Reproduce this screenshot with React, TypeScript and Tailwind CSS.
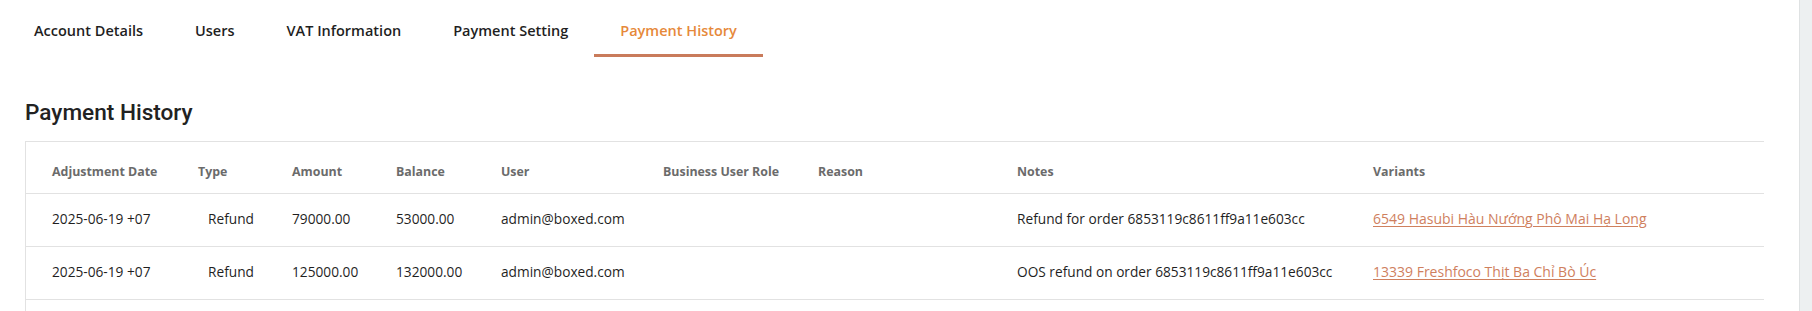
import React from "react";

const tabs = ["Account Details", "Users", "VAT Information", "Payment Setting", "Payment History"];

const cols = [
  { label: "Adjustment Date", w: "w-[146px]" },
  { label: "Type", w: "w-[94px]" },
  { label: "Amount", w: "w-[104px]" },
  { label: "Balance", w: "w-[105px]" },
  { label: "User", w: "w-[162px]" },
  { label: "Business User Role", w: "w-[155px]" },
  { label: "Reason", w: "w-[199px]" },
  { label: "Notes", w: "w-[356px]" },
  { label: "Variants", w: "flex-1" },
];

const rows = [
  {
    date: "2025-06-19 +07",
    type: "Refund",
    amount: "79000.00",
    balance: "53000.00",
    user: "admin@boxed.com",
    notes: "Refund for order 6853119c8611ff9a11e603cc",
    variant: "6549 Hasubi Hàu Nướng Phô Mai Hạ Long",
  },
  {
    date: "2025-06-19 +07",
    type: "Refund",
    amount: "125000.00",
    balance: "132000.00",
    user: "admin@boxed.com",
    notes: "OOS refund on order 6853119c8611ff9a11e603cc",
    variant: "13339 Freshfoco Thịt Ba Chỉ Bò Úc",
  },
];

export default function App() {
  return (
    <div className="flex h-[311px] w-full overflow-hidden bg-white font-['Open_Sans',sans-serif] text-[#1f1f1f]">
      <main className="flex-1 pl-[8px] pr-[35px]">
        {/* tabs */}
        <nav className="flex">
          {tabs.map((t) => {
            const active = t === "Payment History";
            return (
              <button
                key={t}
                className={
                  active
                    ? "border-b-[3px] border-[#c97b5b] px-[26px] pt-[21px] pb-[13px] text-[14.5px] leading-5 font-semibold text-[#e6893a]"
                    : "border-b-[3px] border-transparent px-[26px] pt-[21px] pb-[13px] text-[14.5px] leading-5 font-semibold text-[#1f1f1f]"
                }
              >
                {t}
              </button>
            );
          })}
        </nav>

        <h2 className="mt-[42px] ml-[17px] font-['Roboto',sans-serif] text-[22.6px] leading-7 font-medium text-[#222]">
          Payment History
        </h2>

        {/* table */}
        <div className="mt-[14px] ml-[17px] border-t border-l border-[#e2e2e2] text-[13.7px]">
          <div className="flex h-[52px] items-center border-b border-[#e2e2e2] pt-[10px] pl-[26px] text-[12.4px] font-bold text-[#6b6b6b]">
            {cols.map((c) => (
              <div key={c.label} className={c.w}>
                {c.label}
              </div>
            ))}
          </div>
          {rows.map((r, i) => (
            <div key={i} className="flex h-[53px] items-center border-b border-[#e2e2e2] pb-[2px] pl-[26px]">
              <div className="w-[146px]">{r.date}</div>
              <div className="w-[94px] pl-[10px]">{r.type}</div>
              <div className="w-[104px]">{r.amount}</div>
              <div className="w-[105px]">{r.balance}</div>
              <div className="w-[162px]">{r.user}</div>
              <div className="w-[155px]" />
              <div className="w-[199px]" />
              <div className="w-[356px]">{r.notes}</div>
              <div className="flex-1">
                <a href="#" className="text-[14px] text-[#cf805e] underline underline-offset-2">
                  {r.variant}
                </a>
              </div>
            </div>
          ))}
          <div className="h-[20px]" />
        </div>
      </main>
      <div className="w-[13px] border-l border-[#dfe2e3] bg-[#edf0f1]" />
    </div>
  );
}
